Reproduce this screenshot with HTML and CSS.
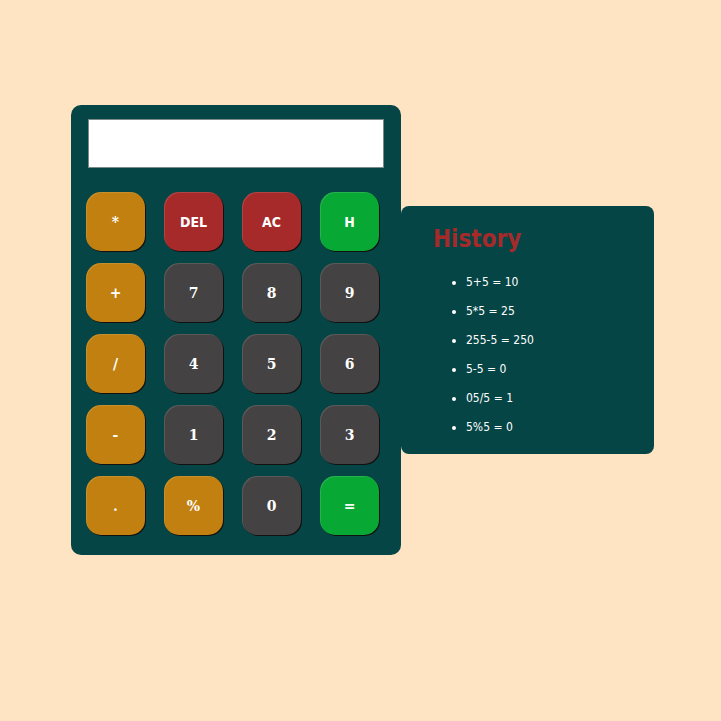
FILE: index.html
```html
<!DOCTYPE html>
<html>
<head>
<meta charset="utf-8">
<link rel="stylesheet" href="styles.css">
</head>
<body>
<div class="page">
  <div class="calc">
    <div class="display"></div>
    <div class="keys">
      <button class="key op">*</button>
      <button class="key red word">DEL</button>
      <button class="key red word">AC</button>
      <button class="key green word">H</button>
      <button class="key op">+</button>
      <button class="key num">7</button>
      <button class="key num">8</button>
      <button class="key num">9</button>
      <button class="key op">/</button>
      <button class="key num">4</button>
      <button class="key num">5</button>
      <button class="key num">6</button>
      <button class="key op">-</button>
      <button class="key num">1</button>
      <button class="key num">2</button>
      <button class="key num">3</button>
      <button class="key op">.</button>
      <button class="key op">%</button>
      <button class="key num">0</button>
      <button class="key green">=</button>
    </div>
  </div>
  <div class="history">
    <h2 class="history-title">History</h2>
    <ul class="history-list">
      <li>5+5 = 10</li>
      <li>5*5 = 25</li>
      <li>255-5 = 250</li>
      <li>5-5 = 0</li>
      <li>05/5 = 1</li>
      <li>5%5 = 0</li>
    </ul>
  </div>
</div>
</body>
</html>
```
FILE: styles.css
```css
html, body {
  margin: 0;
  padding: 0;
  background: #ffe4c4;
  height: 100%;
}
.page {
  display: flex;
  align-items: center;
  padding: 105px 0 0 71px;
  width: max-content;
}
.calc {
  width: 330px;
  height: 450px;
  box-sizing: border-box;
  background: #054545;
  border-radius: 10px;
  padding: 14px 15px 0 15px;
}
.display {
  margin-left: 2px;
  width: 296px;
  height: 49px;
  box-sizing: border-box;
  background: #fff;
  border: 1px solid #7a8a8a;
}
.keys {
  margin-top: 24px;
  display: grid;
  grid-template-columns: repeat(4, 59px);
  grid-auto-rows: 59px;
  column-gap: 19px;
  row-gap: 12px;
}
.key {
  margin: 0;
  padding: 0;
  border: none;
  border-radius: 15px;
  color: #fff;
  font-family: "DejaVu Serif", serif;
  font-weight: bold;
  font-size: 14px;
  box-shadow: inset 1px 1px 0 rgba(255,255,255,0.12), 1px 1px 0 #111;
}
.key.word {
  font-family: "DejaVu Sans Condensed", "DejaVu Sans", sans-serif;
  font-size: 14px;
}
.op { background: #c18010; }
.red { background: #a62a2a; }
.green { background: #08a834; }
.num { background: #444242; }
.history {
  width: 253px;
  height: 248px;
  box-sizing: border-box;
  background: #054545;
  border-radius: 8px;
  padding: 20px 0 0 32px;
}
.history-title {
  margin: 0;
  font-family: "DejaVu Sans Condensed", "DejaVu Sans", sans-serif;
  font-weight: bold;
  font-size: 24px;
  line-height: 26px;
  color: #a62a2a;
}
.history-list {
  margin: 23px 0 0 0;
  padding-left: 33px;
  color: #fff;
  font-family: "DejaVu Sans Condensed", "DejaVu Sans", sans-serif;
  font-size: 12px;
}
.history-list li {
  line-height: 15px;
  margin-bottom: 14px;
  padding-left: 0;
}
```
